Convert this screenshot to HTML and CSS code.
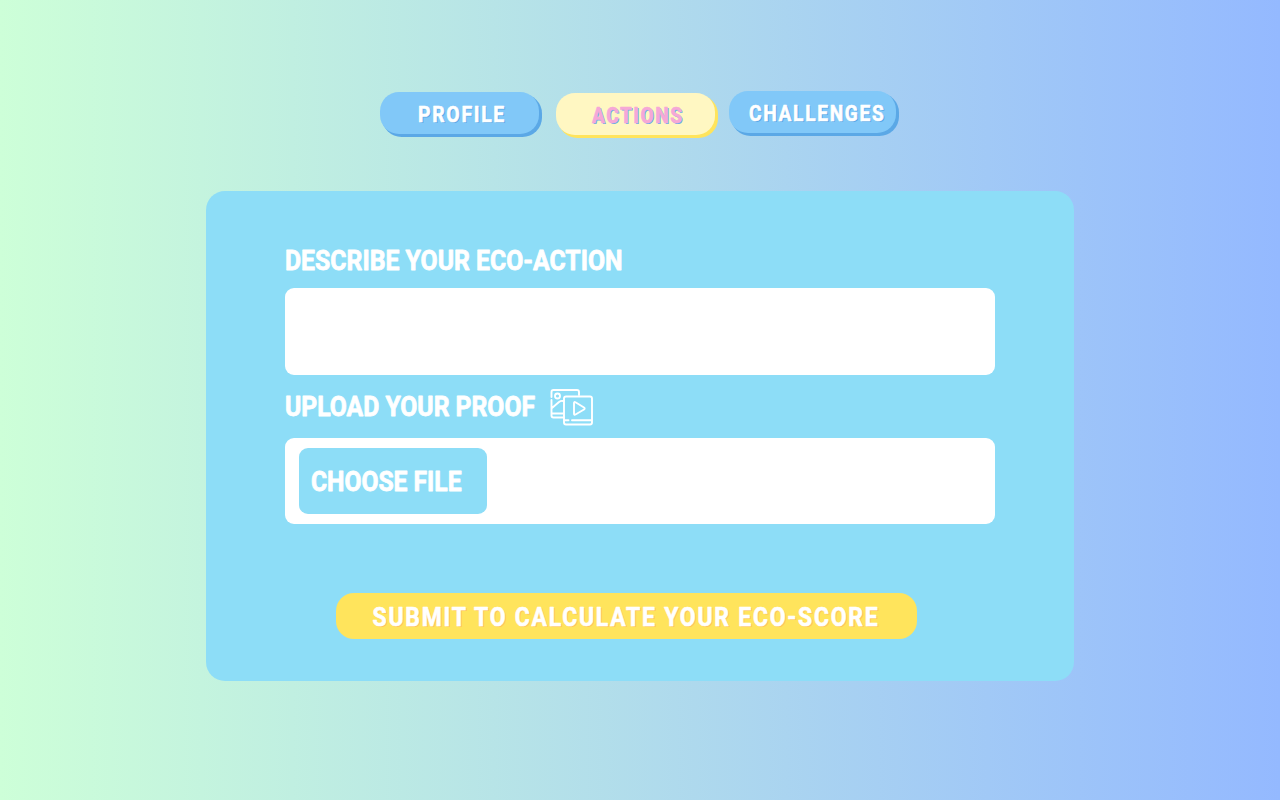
FILE: index.html
```html
<!DOCTYPE html>
<html lang="en">
<head>
<meta charset="utf-8">
<title>Eco actions</title>
<link rel="stylesheet" href="styles.css">
</head>
<body>
<nav class="tabs">
  <a class="tab"><svg class="text" width="159" height="42"><text x="39.2" y="31.3" textLength="88" lengthAdjust="spacingAndGlyphs" class="shade">PROFILE</text><text x="38" y="30" textLength="88" lengthAdjust="spacingAndGlyphs">PROFILE</text></svg></a>
  <a class="tab active"><svg class="text" width="159" height="42"><text x="37.2" y="31.3" textLength="91.5" lengthAdjust="spacingAndGlyphs" class="shade">ACTIONS</text><text x="36" y="30" textLength="91.5" lengthAdjust="spacingAndGlyphs">ACTIONS</text></svg></a>
  <a class="tab wide"><svg class="text" width="168" height="42"><text x="21.2" y="31.3" textLength="136.5" lengthAdjust="spacingAndGlyphs" class="shade">CHALLENGES</text><text x="20" y="30" textLength="136.5" lengthAdjust="spacingAndGlyphs">CHALLENGES</text></svg></a>
</nav>
<main class="panel">
  <svg class="text label" width="345" height="40"><text x="0" y="22" textLength="337.5" lengthAdjust="spacingAndGlyphs">DESCRIBE YOUR ECO-ACTION</text></svg>
  <div class="field"></div>
  <div class="proof">
    <svg class="text label" width="265" height="45"><text x="0" y="23.5" textLength="250" lengthAdjust="spacingAndGlyphs">UPLOAD YOUR PROOF</text></svg>
    <svg class="media" width="44" height="38" viewBox="0 0 44 38">
      <path d="M1.5 9V4Q1.5 2 3.5 2H27Q29 2 29 4V7M1.5 12V27.5Q1.5 29.5 3.5 29.5H13M2 25.5H13M2 20L9 14Q11 12.5 13 13"/>
      <circle cx="7.5" cy="8" r="2.5"/>
      <path d="M16 8.5H40Q42 8.5 42 10.500V34.5Q42 36.500 40 36.500H16Q14 36.500 14 34.500V10.500Q14 8.500 16 8.500ZM14.500 32.200H18.500M22 32.200H42M24 15Q24 13.500 25.500 14.300L34 19.500Q35.300 20.500 34 21.500L25.500 26.500Q24 27.300 24 25.500Z"/>
    </svg>
  </div>
  <div class="field upload">
    <div class="choose"><svg class="text label" width="188" height="66"><text x="12" y="42.8" textLength="150.5" lengthAdjust="spacingAndGlyphs">CHOOSE FILE</text></svg></div>
  </div>
  <div class="submit"><svg class="text" width="581" height="46"><text x="37.8" y="33.8" textLength="507" lengthAdjust="spacingAndGlyphs" class="shade">SUBMIT TO CALCULATE YOUR ECO-SCORE</text><text x="36.500" y="32.700" textLength="507" lengthAdjust="spacingAndGlyphs">SUBMIT TO CALCULATE YOUR ECO-SCORE</text></svg></div>
</main>
</body>
</html>
```
FILE: styles.css
```css
* { box-sizing: border-box; }
body {
  margin: 0;
  height: 800px;
  overflow: hidden;
  background: linear-gradient(90deg, #cdffd8, #94b9ff);
  font-family: Roboto, sans-serif;
}
svg { display: block; overflow: visible; }
.text {
  fill: #fff;
  stroke: #fff;
  stroke-width: .6px;
  stroke-linejoin: round;
  font-size: 22px;
  font-weight: 700;
  letter-spacing: 2px;
}
.tabs {
  display: flex;
  align-items: flex-start;
  padding: 92px 0 0 380px;
}
.tab {
  width: 159px;
  height: 42px;
  border-radius: 19px;
  background: #81c8f8;
  box-shadow: 2.5px 2.5px 0 .5px #5ba8e6;
}
.active {
  margin: 1px 14px 0 17px;
  background: #fff7c2;
  box-shadow: 2.5px 2.5px 0 .5px #ffe45c;
}
.wide { width: 167px; margin-top: -1px; }
.shade { fill: #5ba8e6; stroke: none; }
.active .text { fill: #f6a8d6; stroke: #f6a8d6; }
.active .shade { fill: #6eaae8; stroke: none; }
.panel {
  width: 868px;
  height: 490px;
  margin: 56px 0 0 206px;
  padding: 57px 79px 0;
  border-radius: 19px;
  background: #8dddf7;
}
.label { font-size: 28px; letter-spacing: 0; stroke-width: .8px; }
.field {
  width: 710px;
  height: 87px;
  border-radius: 9px;
  background: #fff;
}
.proof { display: flex; height: 62px; padding-top: 17px; }
.media {
  margin-top: -4px;
  fill: none;
  stroke: #fff;
  stroke-width: 1.9;
  stroke-linecap: round;
  stroke-linejoin: round;
}
.upload { margin-top: 1px; height: 86px; padding: 10px 14px; }
.choose {
  width: 188px;
  height: 66px;
  border-radius: 9px;
  background: #8dddf7;
}
.submit {
  width: 581px;
  height: 46px;
  margin: 69px 0 0 51px;
  border-radius: 18px;
  background: #ffe45c;
}
.submit .text { font-size: 25.5px; }
.submit .shade { fill: #ffc45e; }
```
